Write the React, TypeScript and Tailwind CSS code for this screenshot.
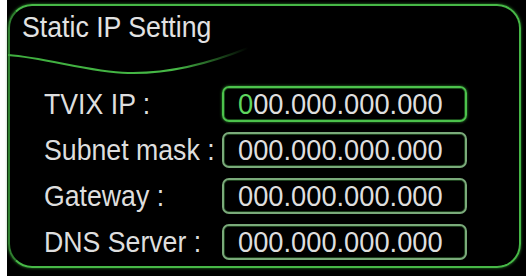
const FIELDS = [
  { label: "TVIX IP :", value: "000.000.000.000", active: true },
  { label: "Subnet mask :", value: "000.000.000.000", active: false },
  { label: "Gateway :", value: "000.000.000.000", active: false },
  { label: "DNS Server :", value: "000.000.000.000", active: false },
];

function IpBox({ value, active }: { value: string; active: boolean }) {
  return (
    <div
      className={`h-[36px] w-[245px] rounded-[7px] border-2 pl-[14px] text-[29px] leading-[32px] text-[#dedede] ${
        active
          ? "border-[#4cc24c] shadow-[inset_0_0_0_1px_#1a4a1a,0_0_3px_#2f8f2f]"
          : "border-[#7aaa7a] shadow-[inset_0_0_0_1px_#1c3f1c]"
      }`}
    >
      <span className="inline-block origin-left scale-x-[0.94] whitespace-nowrap">
        {active ? (
          <>
            <span className="text-[#5fd65f]">{value[0]}</span>
            {value.slice(1)}
          </>
        ) : (
          value
        )}
      </span>
    </div>
  );
}

export default function App() {
  return (
    <div
      className="flex h-[276px] w-[526px] bg-black"
      style={{ fontFamily: '"Liberation Sans", Arial, sans-serif' }}
    >
      {/* white strip at the left edge of the capture */}
      <div className="h-full w-[7px] shrink-0 bg-white" />

      <div className="flex-1 pt-[4px] pl-[1px]">
        <div className="relative flex h-[264px] w-[513px] flex-col rounded-[24px] border-2 border-[#47b847] border-l-[#2f7f2f] shadow-[0_0_3px_#2c8c2c]">
          {/* header with the wave underline */}
          <div className="relative h-[80px] shrink-0 pl-[12px] pt-[5px]">
            <h1 className="inline-block origin-left scale-x-[0.92] whitespace-nowrap text-[29px] leading-[32px] text-[#e2e2e2]">
              Static IP Setting
            </h1>
            <svg
              className="absolute -left-[2px] -top-[2px] h-[80px] w-[250px]"
              viewBox="0 0 250 80"
              fill="none"
            >
              <defs>
                <linearGradient id="wave" x1="0" y1="0" x2="1" y2="0">
                  <stop offset="0" stopColor="#3fae3f" />
                  <stop offset="0.7" stopColor="#46b846" />
                  <stop offset="1" stopColor="#46b846" stopOpacity="0" />
                </linearGradient>
              </defs>
              <path
                d="M0 51 C 40 54, 80 68, 120 69 S 200 60, 240 44"
                stroke="url(#wave)"
                strokeWidth="2"
              />
            </svg>
          </div>

          {/* form rows */}
          <div className="flex flex-col gap-[10px] pl-[34px]">
            {FIELDS.map((f) => (
              <div key={f.label} className="flex items-center">
                <div className="w-[178px] text-[29px] leading-[36px] text-[#dedede]">
                  <span className="inline-block origin-left scale-x-[0.92] whitespace-nowrap">
                    {f.label}
                  </span>
                </div>
                <IpBox value={f.value} active={f.active} />
              </div>
            ))}
          </div>
        </div>
      </div>
    </div>
  );
}
